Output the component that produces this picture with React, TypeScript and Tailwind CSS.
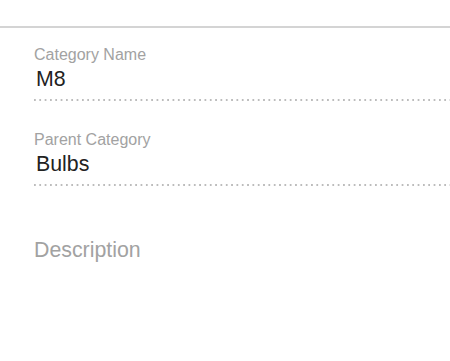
export default function App() {
  const dots =
    "h-[2px] w-full bg-[linear-gradient(to_right,#bcbcbc_0px,#bcbcbc_2px,transparent_2px)] bg-[length:5.33px_2px] bg-repeat-x";
  return (
    <div className="w-[450px] h-[361px] bg-white overflow-hidden font-['Liberation_Sans',Arial,sans-serif]">
      <div className="h-[26px]" />
      <div className="h-[2px] w-full bg-[#d4d4d4]" />
      <div className="pl-[34px] pt-[19px] flex flex-col">
        <div className="flex flex-col">
          <div className="text-[16px] leading-[16px] text-[#a2a2a2]">Category Name</div>
          <div className="mt-[4px] pl-[2px] text-[21.33px] leading-[24px] text-[#222222]">M8</div>
          <div className={"mt-[8px] " + dots} />
        </div>
        <div className="mt-[31px] flex flex-col">
          <div className="text-[16px] leading-[16px] text-[#a2a2a2]">Parent Category</div>
          <div className="mt-[4px] pl-[2px] text-[21.33px] leading-[24px] text-[#222222]">Bulbs</div>
          <div className={"mt-[8px] " + dots} />
        </div>
        <div className="mt-[52px] text-[21.33px] leading-[24px] text-[#a2a2a2]">Description</div>
      </div>
    </div>
  );
}
